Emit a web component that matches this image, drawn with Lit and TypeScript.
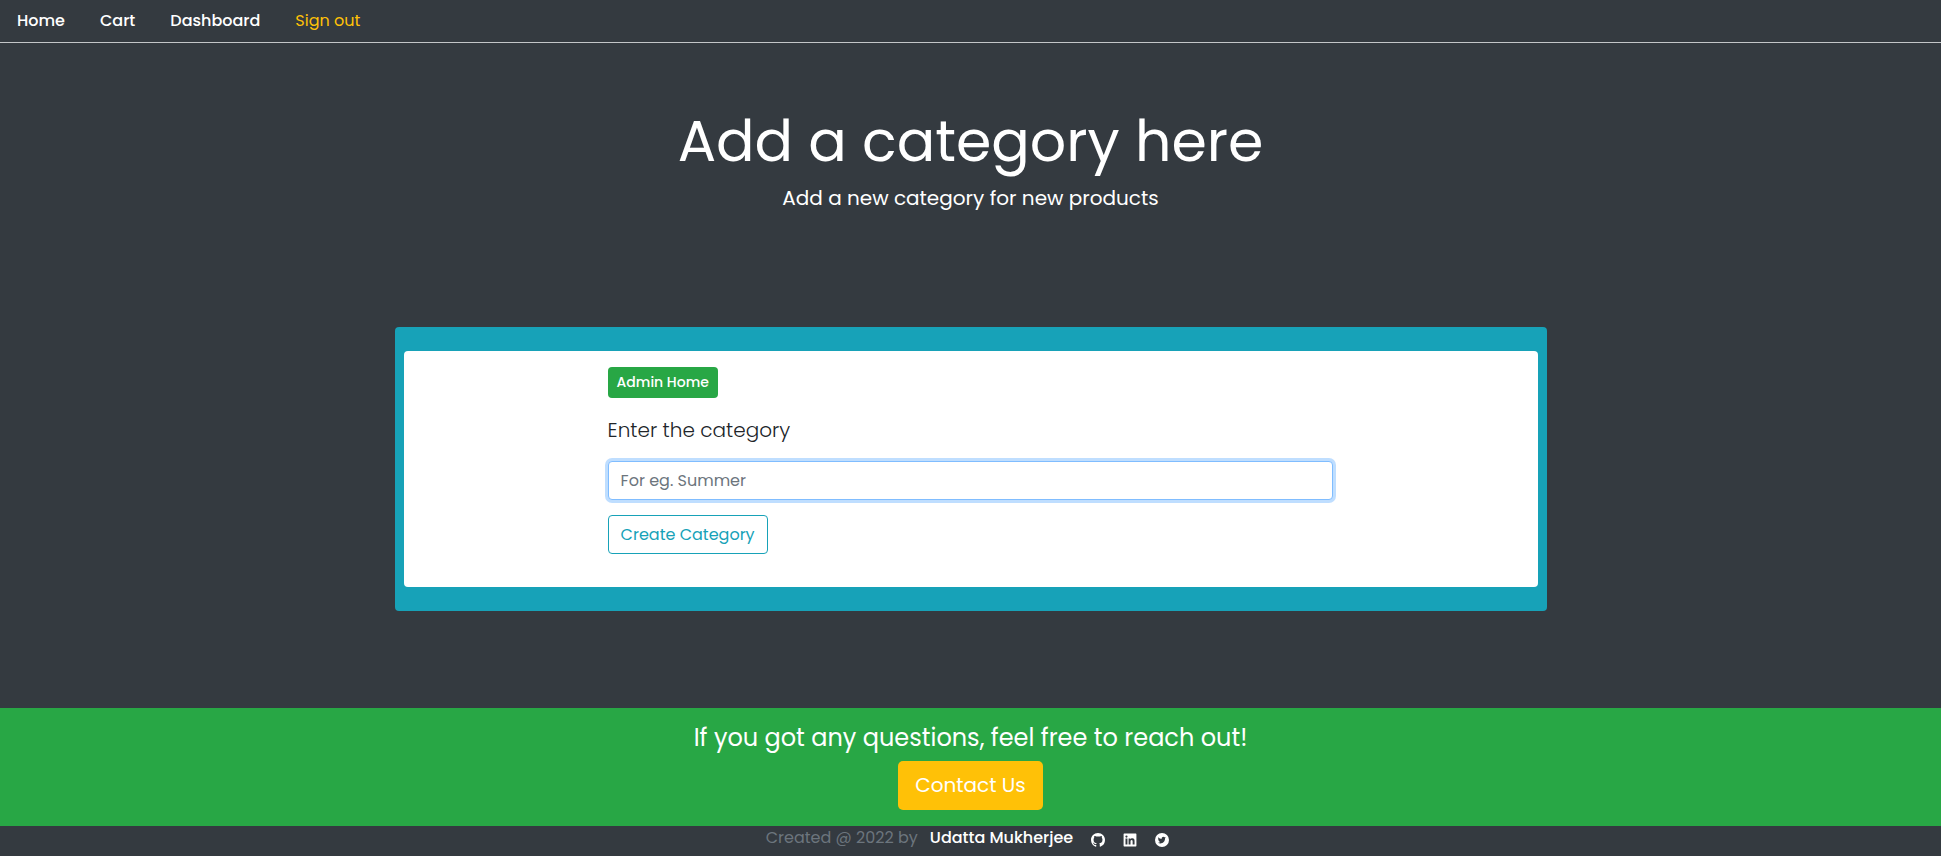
import { LitElement, html, css, svg } from "lit";
import { customElement, state } from "lit/decorators.js";

const github = svg`<path fill="currentColor" transform="scale(1.5)" d="M8 0C3.580 0 0 3.580 0 8c0 3.540 2.290 6.530 5.470 7.590.4.070.550-.170.550-.380 0-.190-.010-.820-.010-1.490-2.010.370-2.530-.490-2.690-.940-.090-.230-.480-.940-.820-1.130-.280-.150-.680-.520-.010-.530.630-.010 1.080.580 1.230.820.720 1.210 1.870.870 2.330.660.070-.520.280-.870.510-1.070-1.780-.200-3.640-.890-3.640-3.950 0-.870.310-1.590.820-2.150-.080-.200-.360-1.020.080-2.120 0 0 .670-.210 2.200.820.640-.180 1.320-.270 2-.270s1.360.090 2 .270c1.530-1.040 2.200-.820 2.200-.820.440 1.100.160 1.920.080 2.120.510.560.820 1.270.820 2.150 0 3.070-1.870 3.750-3.650 3.950.290.250.540.730.540 1.480 0 1.070-.010 1.930-.010 2.200 0 .210.150.460.550.380A8.010 8.010 0 0 0 16 8c0-4.420-3.580-8-8-8z"/>`;
const linkedin = svg`<path fill="currentColor" fill-rule="evenodd" d="M2 1h20a1 1 0 0 1 1 1v20a1 1 0 0 1-1 1H2a1 1 0 0 1-1-1V2a1 1 0 0 1 1-1zM4.300 9.400v10.300h3.300V9.400zM5.950 4.300a1.900 1.900 0 1 0 0 3.800 1.900 1.900 0 0 0 0-3.800zM9.600 9.400v10.300h3.300v-5.100c0-1.400.300-2.700 1.900-2.700s1.700 1.500 1.700 2.800v5h3.300V14c0-2.800-.600-4.900-3.900-4.900-1.500 0-2.600.900-3 1.700v-1.400z"/>`;
const twitter = svg`<path fill="currentColor" fill-rule="evenodd" d="M12 0a12 12 0 1 0 0 24 12 12 0 0 0 0-24zM18.600 7.800c-.500.300-1 .400-1.600.500.600-.400 1-.900 1.200-1.600-.500.300-1.100.600-1.800.700a2.800 2.800 0 0 0-4.800 2.600c-2.300-.100-4.400-1.200-5.800-2.900-.700 1.200-.400 2.900.900 3.800-.500 0-.900-.100-1.300-.300 0 1.300.900 2.500 2.200 2.800-.400.100-.800.100-1.200 0 .400 1.100 1.400 1.900 2.600 2a5.700 5.700 0 0 1-4.200 1.200c4.800 3 12.400 1.100 12.400-7.400.500-.400 1-.900 1.400-1.400z"/>`;

const links = [
  { label: "Home", href: "#home" },
  { label: "Cart", href: "#cart" },
  { label: "Dashboard", href: "#dashboard" },
];

const socials = [
  { label: "GitHub", href: "#github", icon: github },
  { label: "LinkedIn", href: "#linkedin", icon: linkedin },
  { label: "Twitter", href: "#twitter", icon: twitter },
];

@customElement("app-root")
export class AppRoot extends LitElement {
  @state() private category = "";

  static styles = css`
    :host {
      display: flex;
      flex-direction: column;
      min-height: 100vh;
      background: #343a40;
      color: #fff;
      font-family: Poppins, Inter, sans-serif;
      font-size: 16px;
      line-height: 24px;
    }
    * { box-sizing: border-box; }
    a { color: inherit; text-decoration: none; }
    h1, h4, p { margin: 0; font-weight: 400; }
    button, input { font: inherit; }
    .nav {
      display: flex;
      gap: 35px;
      padding: 9px 17px;
      border-bottom: 1px solid #c3c6c8;
      font-weight: 500;
    }
    .signout {
      padding: 0;
      border: 0;
      background: none;
      color: #ffc107;
      font-weight: 400;
    }
    .hero {
      display: flex;
      flex-direction: column;
      gap: 5px;
      padding: 62px 16px 113px;
      text-align: center;
    }
    .title { font-size: 57px; line-height: 72px; }
    .lead { font-size: 20px; line-height: 32px; }
    .main { flex: 1; padding: 0 16px 96px; }
    .card {
      max-width: 1152px;
      margin: 0 auto;
      padding: 24px 9px;
      border-radius: 4px;
      background: #17a2b8;
    }
    .panel {
      padding: 16px 18% 33px;
      border-radius: 4px;
      background: #fff;
      color: #212529;
    }
    .admin {
      display: inline-block;
      padding: 4px 9px;
      border-radius: 4px;
      background: #28a745;
      color: #fff;
      font-size: 14px;
      line-height: 23px;
      font-weight: 500;
    }
    .form {
      display: flex;
      flex-direction: column;
      align-items: flex-start;
      gap: 15px;
      padding-top: 16px;
    }
    .label { font-size: 20px; line-height: 32px; font-weight: 300; }
    .field {
      width: 100%;
      height: 39px;
      padding: 6px 12px;
      border: 1px solid #80bdff;
      border-radius: 4px;
      background: #fff;
      color: #495057;
      outline: 0;
      box-shadow: 0 0 0 3px rgba(0, 123, 255, 0.25);
    }
    .field::placeholder { color: #6c757d; opacity: 1; }
    .create {
      padding: 6px 12px;
      border: 1px solid #17a2b8;
      border-radius: 4px;
      background: transparent;
      color: #17a2b8;
      line-height: 25px;
    }
    .reach {
      display: flex;
      flex-direction: column;
      align-items: center;
      gap: 7px;
      padding: 14px 16px 16px;
      background: #28a745;
      text-align: center;
    }
    .question { font-size: 24px; line-height: 32px; }
    .contact {
      padding: 8px 17px;
      border: 0;
      border-radius: 5px;
      background: #ffc107;
      color: #fff;
      font-size: 20px;
      line-height: 33px;
    }
    .credit {
      display: flex;
      justify-content: center;
      align-items: center;
      gap: 12px;
      padding: 0 16px 6px;
      color: #6c757d;
    }
    .author { color: #fff; font-weight: 500; }
    .socials { display: flex; gap: 18px; padding: 3px 6px 0; color: #fff; }
    .social { display: flex; }
    .icon { width: 14px; height: 14px; }
  `;

  private onInput(e: Event) {
    this.category = (e.target as HTMLInputElement).value;
  }

  private onSubmit(e: Event) {
    e.preventDefault();
  }

  render() {
    return html`
      <nav class="nav">
        ${links.map((l) => html`<a href=${l.href}>${l.label}</a>`)}
        <button class="signout" type="button">Sign out</button>
      </nav>
      <header class="hero">
        <h1 class="title">Add a category here</h1>
        <p class="lead">Add a new category for new products</p>
      </header>
      <main class="main">
        <section class="card">
          <div class="panel">
            <a class="admin" href="#admin">Admin Home</a>
            <form class="form" @submit=${this.onSubmit}>
              <label class="label" for="category">Enter the category</label>
              <input
                class="field"
                id="category"
                type="text"
                placeholder="For eg. Summer"
                .value=${this.category}
                @input=${this.onInput}
              />
              <button class="create" type="submit">Create Category</button>
            </form>
          </div>
        </section>
      </main>
      <footer>
        <div class="reach">
          <h4 class="question">If you got any questions, feel free to reach out!</h4>
          <button class="contact" type="button">Contact Us</button>
        </div>
        <div class="credit">
          <span>Created @ 2022 by</span>
          <a class="author" href="#author">Udatta Mukherjee</a>
          <div class="socials">
            ${socials.map(
              (s) => html`<a class="social" href=${s.href} aria-label=${s.label}>
                <svg class="icon" viewBox="0 0 24 24" aria-hidden="true">${s.icon}</svg>
              </a>`
            )}
          </div>
        </div>
      </footer>
    `;
  }
}
